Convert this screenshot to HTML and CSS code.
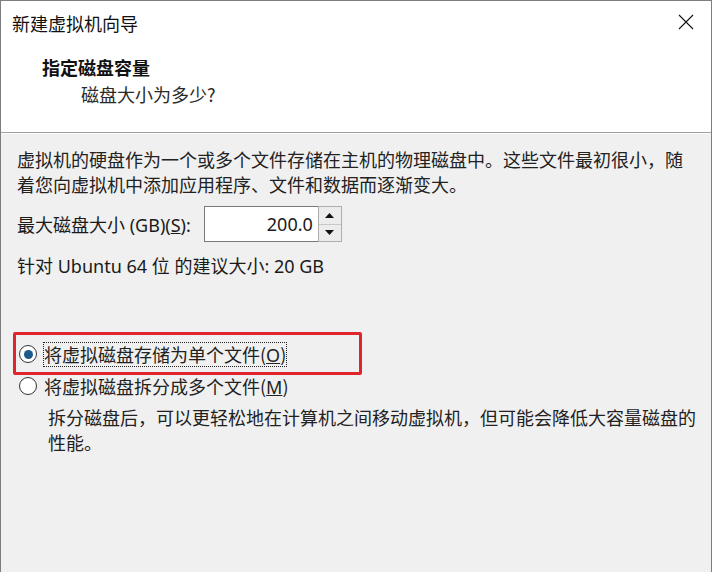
FILE: index.html
```html
<!DOCTYPE html>
<html lang="zh-CN">
<head>
<meta charset="utf-8">
<title>新建虚拟机向导</title>
<link rel="stylesheet" href="styles.css">
</head>
<body>
<div class="window">
  <div class="titlebar">
    <span class="title">新建虚拟机向导</span>
    <svg class="close" width="16" height="16" viewBox="0 0 16 16"><path d="M1 1L15 15M15 1L1 15" stroke="#111" stroke-width="1.1" fill="none"/></svg>
  </div>
  <div class="header">
    <div class="heading">指定磁盘容量</div>
    <div class="subtitle">磁盘大小为多少?</div>
  </div>
  <div class="content">
    <p class="intro">虚拟机的硬盘作为一个或多个文件存储在主机的物理磁盘中。这些文件最初很小，随<br>着您向虚拟机中添加应用程序、文件和数据而逐渐变大。</p>
    <div class="size-row">
      <label class="size-label">最大磁盘大小 (GB)(<u>S</u>):</label>
      <div class="spin">
        <div class="spin-input">200.0</div>
        <div class="spin-btns">
          <div class="spin-btn"><svg width="9" height="5" viewBox="0 0 9 5"><path d="M0 5L4.5 0L9 5Z" fill="#111"/></svg></div>
          <div class="spin-btn"><svg width="9" height="5" viewBox="0 0 9 5"><path d="M0 0L9 0L4.5 5Z" fill="#111"/></svg></div>
        </div>
      </div>
    </div>
    <div class="recommend">针对 Ubuntu 64 位 的建议大小: 20 GB</div>
    <div class="options">
      <div class="highlight"></div>
      <div class="radio-row">
        <span class="radio checked"></span>
        <span class="radio-text focused">将虚拟磁盘存储为单个文件(<u>O</u>)</span>
      </div>
      <div class="radio-row">
        <span class="radio"></span>
        <span class="radio-text">将虚拟磁盘拆分成多个文件(<u>M</u>)</span>
      </div>
      <p class="desc">拆分磁盘后，可以更轻松地在计算机之间移动虚拟机，但可能会降低大容量磁盘的<br>性能。</p>
    </div>
  </div>
</div>
</body>
</html>
```
FILE: styles.css
```css
html, body {
  margin: 0;
  padding: 0;
  background: #f0f0f0;
}
body {
  font-family: "Noto Sans", "Noto Sans CJK SC", sans-serif;
  color: #1a1a1a;
}
.window {
  width: 712px;
  height: 572px;
  box-sizing: border-box;
  border: 1px solid #7d7d7d;
  border-bottom: none;
  display: flex;
  flex-direction: column;
  background: #f0f0f0;
}
.titlebar {
  height: 43px;
  background: #fff;
  display: flex;
  align-items: center;
  justify-content: space-between;
  padding: 0 17px 0 11px;
}
.title {
  font-size: 18px;
  font-family: "Noto Sans CJK SC", sans-serif;
  color: #111;
}
.close {
  display: block;
  margin-top: -1px;
}
.header {
  height: 89px;
  background: #fff;
  border-bottom: 1px solid #a0a0a0;
  padding-top: 11px;
  box-sizing: border-box;
}
.heading {
  margin-left: 41px;
  font-size: 18px;
  font-weight: 700;
  line-height: 24px;
  font-family: "Noto Sans CJK SC", sans-serif;
  color: #111;
}
.subtitle {
  margin-left: 80px;
  margin-top: 3px;
  font-size: 18px;
  line-height: 24px;
  color: #2a2a2a;
  font-family: "Noto Sans CJK SC", sans-serif;
}
.content {
  flex: 1;
  padding: 13px 16px 0 16px;
  border-top: 1px solid #fff;
}
.intro {
  margin: 0;
  font-size: 18px;
  line-height: 25px;
  font-family: "Noto Sans CJK SC", sans-serif;
  color: #222;
  white-space: nowrap;
}
.size-row {
  display: flex;
  align-items: center;
  margin-top: 9px;
  height: 36px;
}
.size-label {
  font-size: 18px;
  margin-right: 13px;
}
.spin {
  display: flex;
  height: 36px;
}
.spin-input {
  width: 108px;
  height: 34px;
  background: #fff;
  border: 1px solid #7a7a7a;
  border-right: none;
  font-size: 18px;
  line-height: 34px;
  text-align: right;
  padding-right: 5px;
}
.spin-btns {
  width: 24px;
  display: flex;
  flex-direction: column;
  border: 1px solid #adadad;
  background: #e6e6e6;
  box-sizing: border-box;
}
.spin-btn {
  flex: 1;
  display: flex;
  align-items: center;
  justify-content: center;
  border-bottom: 1px solid #c8c8c8;
  background: #ececec;
}
.spin-btn:last-child {
  border-bottom: none;
}
.recommend {
  margin-top: 12px;
  font-size: 18px;
  line-height: 24px;
}
.options {
  position: relative;
  margin-top: 64px;
}
.highlight {
  position: absolute;
  left: -4px;
  top: -10px;
  width: 343px;
  height: 37px;
  border: 3px solid #e0242c;
  border-radius: 2px;
}
.radio-row {
  display: flex;
  align-items: center;
  height: 24px;
  margin-bottom: 8px;
}
.radio {
  width: 16px;
  height: 16px;
  border: 1px solid #333;
  border-radius: 50%;
  background: #fff;
  margin-left: 2px;
  margin-right: 6px;
  position: relative;
  flex: none;
}
.radio.checked::after {
  content: "";
  position: absolute;
  left: 3.5px;
  top: 3.5px;
  width: 9px;
  height: 9px;
  border-radius: 50%;
  background: #1d5a8c;
}
.radio-text {
  font-size: 18px;
  line-height: 22px;
  font-family: "Noto Sans CJK SC", sans-serif;
  color: #222;
  border: 1px dotted transparent;
}
.radio-text u {
  font-family: "Noto Sans", sans-serif;
}
.radio-text.focused {
  border: 1px dotted #222;
}
.desc {
  margin: -1px 0 0 31px;
  font-size: 18px;
  line-height: 25px;
  font-family: "Noto Sans CJK SC", sans-serif;
  color: #222;
  white-space: nowrap;
}
```
